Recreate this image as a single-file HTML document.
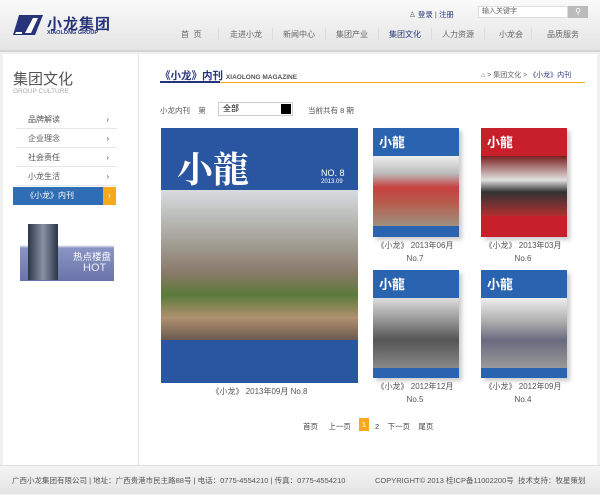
<!DOCTYPE html>
<html><head><meta charset="utf-8"><style>
*{margin:0;padding:0;box-sizing:border-box}
body{width:600px;height:494px;background:#f0f0f0;font-family:"Liberation Sans","Noto Sans CJK SC",sans-serif;font-size:8px;color:#555;position:relative;overflow:hidden}
.hd{position:absolute;left:0;top:0;width:600px;height:52px;background:linear-gradient(#fafafa,#e4e4e4);border-bottom:2px solid #d4d4d4}
.main{position:absolute;left:3px;top:54px;width:594px;height:411px;background:#fff}
.ft{position:absolute;left:0;top:465px;width:600px;height:29px;background:linear-gradient(#f4f4f4,#e4e4e4);border-top:1px solid #ddd;font-size:7.5px;color:#555;line-height:29px}
.a{position:absolute}
.nav span{position:absolute;top:29px;font-size:8px;color:#666}
.sep{position:absolute;top:28px;width:1px;height:12px;background:#ddd}
.menu div{position:absolute;left:13px;width:101px;height:19px;border-bottom:1px solid #e6e6e6;line-height:19px;padding-left:12px;color:#555}
.menu div:after{content:"›";position:absolute;right:8px;font-size:8px}
.cv{position:absolute;overflow:hidden}
.cap{position:absolute;text-align:center;font-size:8px;color:#555;line-height:13px}
</style></head><body>
<div class="hd">
 <svg class="a" style="left:13px;top:15px" width="30" height="20"><polygon points="6,0 30,0 22,20 0,20" fill="#27347a"/><polygon points="20,3 25,3 18,18 12,18" fill="#fff"/><polygon points="3,17 9,17 9,19 2,19" fill="#fff"/></svg>
 <div class="a" style="left:47px;top:13px;font-size:15px;font-weight:bold;color:#27347a;letter-spacing:1px">小龙集团</div>
 <div class="a" style="left:47px;top:30px;font-size:5.5px;font-weight:bold;color:#27347a">XIAOLONG GROUP</div>
 <div class="a" style="left:409px;top:9px;font-size:7.5px;color:#555">♙ <span style="color:#27347a">登录</span> | <span style="color:#27347a">注册</span></div>
 <div class="a" style="left:478px;top:6px;width:90px;height:12px;background:#fff;border:1px solid #ddd;font-size:7px;padding-left:3px;line-height:10px;color:#666">输入关键字</div>
 <div class="a" style="left:568px;top:6px;width:20px;height:12px;background:#bbb;color:#fff;font-size:8px;text-align:center;line-height:12px">⚲</div>
 <div class="nav">
  <span style="left:181px">首 &nbsp;页</span><div class="sep" style="left:218px"></div>
  <span style="left:230px">走进小龙</span><div class="sep" style="left:272px"></div>
  <span style="left:283px">新闻中心</span><div class="sep" style="left:325px"></div>
  <span style="left:336px">集团产业</span><div class="sep" style="left:378px"></div>
  <span style="left:389px;color:#27347a">集团文化</span><div class="sep" style="left:431px"></div>
  <span style="left:442px">人力资源</span><div class="sep" style="left:484px"></div>
  <span style="left:499px">小龙会</span><div class="sep" style="left:531px"></div>
  <span style="left:547px">品质服务</span>
 </div>
</div>
<div class="main">
 <div class="a" style="left:135px;top:0;width:1px;height:411px;background:#e4e4e4"></div>
 <div class="a" style="left:10px;top:14px;font-size:15px;color:#555">集团文化</div>
 <div class="a" style="left:10px;top:34px;font-size:6.5px;color:#aaa">GROUP CULTURE</div>
 <div class="menu">
  <div style="top:56px">品牌解读</div><div style="top:75px">企业理念</div><div style="top:94px">社会责任</div><div style="top:113px">小龙生活</div>
 </div>
 <div class="a" style="left:10px;top:133px;width:90px;height:18px;background:#2f6db4;color:#fff;line-height:18px;padding-left:13px">《小龙》内刊</div>
 <div class="a" style="left:100px;top:133px;width:13px;height:18px;background:#f7a81b;color:#fff;line-height:18px;text-align:center">›</div>
 <div class="a" style="left:17px;top:167px;width:94px;height:60px;background:linear-gradient(#fff 40%,#8a95c4 45%,#6a74a8)"></div>
 <div class="a" style="left:25px;top:170px;width:30px;height:56px;background:linear-gradient(90deg,#2b3548,#8a93a6,#2b3548)"></div>
 <div class="a" style="left:70px;top:195px;font-size:9.5px;color:#fff">热点楼盘</div>
 <div class="a" style="left:80px;top:208px;font-size:11px;color:#e8ecf8">HOT</div>

 <div class="a" style="left:157px;top:14px;font-size:10.5px;font-weight:bold;color:#27347a">《小龙》内刊 <span style="font-size:6.5px;color:#555">XIAOLONG MAGAZINE</span></div>
 <div class="a" style="left:157px;top:28px;width:425px;height:1px;background:#f7a81b"></div>
 <div class="a" style="left:157px;top:27px;width:60px;height:2px;background:#27347a"></div>
 <div class="a" style="left:478px;top:16px;font-size:7px;color:#666">⌂ &gt; 集团文化 &gt; <span style="color:#27347a">《小龙》内刊</span></div>

 <div class="a" style="left:157px;top:51px;font-size:7.5px">小龙内刊 &nbsp;&nbsp; 第</div>
 <div class="a" style="left:215px;top:48px;width:75px;height:14px;border:1px solid #ccc;font-size:8px;color:#000;padding-left:4px;line-height:12px">全部</div>
 <div class="a" style="left:278px;top:50px;width:10px;height:10px;background:#000"></div>
 <div class="a" style="left:305px;top:51px;font-size:7.5px">当前共有 8 期</div>

 <div class="cv" style="left:158px;top:74px;width:197px;height:255px;background:#2a55a0">
  <div class="a" style="left:16px;top:14px;font-size:36px;color:#fff;font-family:'Noto Serif CJK SC',serif;font-weight:bold">小龍</div>
  <div class="a" style="left:160px;top:40px;font-size:9px;color:#fff">NO. 8</div>
  <div class="a" style="left:160px;top:51px;font-size:6px;color:#fff">2013.09</div>
  <div class="a" style="left:0;top:62px;width:197px;height:150px;background:linear-gradient(#d8dce0 0,#a9a8a0 30%,#8a7a6a 55%,#5a7a3a 70%,#b09070 85%,#6a5a50)"></div>
  <div class="a" style="left:0;top:212px;width:197px;height:43px;background:#2a55a0"></div>
 </div>
 <div class="cap" style="left:158px;top:331px;width:197px">《小龙》 2013年09月 No.8</div>

 <div class="cv" style="left:370px;top:74px;width:86px;height:109px;background:#2a64b0;box-shadow:3px 3px 4px #ccc">
  <div class="a" style="left:6px;top:4px;font-size:13px;color:#fff;font-weight:bold">小龍</div>
  <div class="a" style="left:0;top:28px;width:86px;height:70px;background:linear-gradient(#eee 0,#bbb 25%,#c84040 45%,#b85a4a 65%,#a09080)"></div>
 </div>
 <div class="cap" style="left:362px;top:185px;width:100px">《小龙》 2013年06月<br>No.7</div>
 <div class="cv" style="left:478px;top:74px;width:86px;height:109px;background:#c8202a;box-shadow:3px 3px 4px #ccc">
  <div class="a" style="left:6px;top:4px;font-size:13px;color:#fff;font-weight:bold">小龍</div>
  <div class="a" style="left:0;top:28px;width:86px;height:60px;background:linear-gradient(#7a2020,#e0e0e0 40%,#333 60%,#b03030)"></div>
 </div>
 <div class="cap" style="left:470px;top:185px;width:100px">《小龙》 2013年03月<br>No.6</div>
 <div class="cv" style="left:370px;top:216px;width:86px;height:108px;background:#2a64b0;box-shadow:3px 3px 4px #ccc">
  <div class="a" style="left:6px;top:4px;font-size:13px;color:#fff;font-weight:bold">小龍</div>
  <div class="a" style="left:0;top:28px;width:86px;height:70px;background:linear-gradient(#ddd,#999 30%,#555 60%,#888)"></div>
 </div>
 <div class="cap" style="left:362px;top:326px;width:100px">《小龙》 2012年12月<br>No.5</div>
 <div class="cv" style="left:478px;top:216px;width:86px;height:108px;background:#2a64b0;box-shadow:3px 3px 4px #ccc">
  <div class="a" style="left:6px;top:4px;font-size:13px;color:#fff;font-weight:bold">小龍</div>
  <div class="a" style="left:0;top:28px;width:86px;height:70px;background:linear-gradient(#eee,#aaa 35%,#6a6a80 60%,#999)"></div>
 </div>
 <div class="cap" style="left:470px;top:326px;width:100px">《小龙》 2012年09月<br>No.4</div>

 <div class="a" style="left:300px;top:367px;font-size:7.5px;color:#444">首页 &nbsp;&nbsp;&nbsp; 上一页</div>
 <div class="a" style="left:356px;top:364px;width:10px;height:13px;background:#f7a81b;color:#fff;font-size:7.5px;text-align:center;line-height:13px">1</div>
 <div class="a" style="left:372px;top:367px;font-size:7.5px;color:#444">2 &nbsp;&nbsp; 下一页 &nbsp;&nbsp; 尾页</div>
</div>
<div class="ft"><span style="position:absolute;left:12px">广西小龙集团有限公司 | 地址：广西贵港市民主路88号 | 电话：0775-4554210 | 传真：0775-4554210</span><span style="position:absolute;left:375px">COPYRIGHT© 2013 桂ICP备11002200号 &nbsp;技术支持：牧星策划</span></div>
</body></html>
